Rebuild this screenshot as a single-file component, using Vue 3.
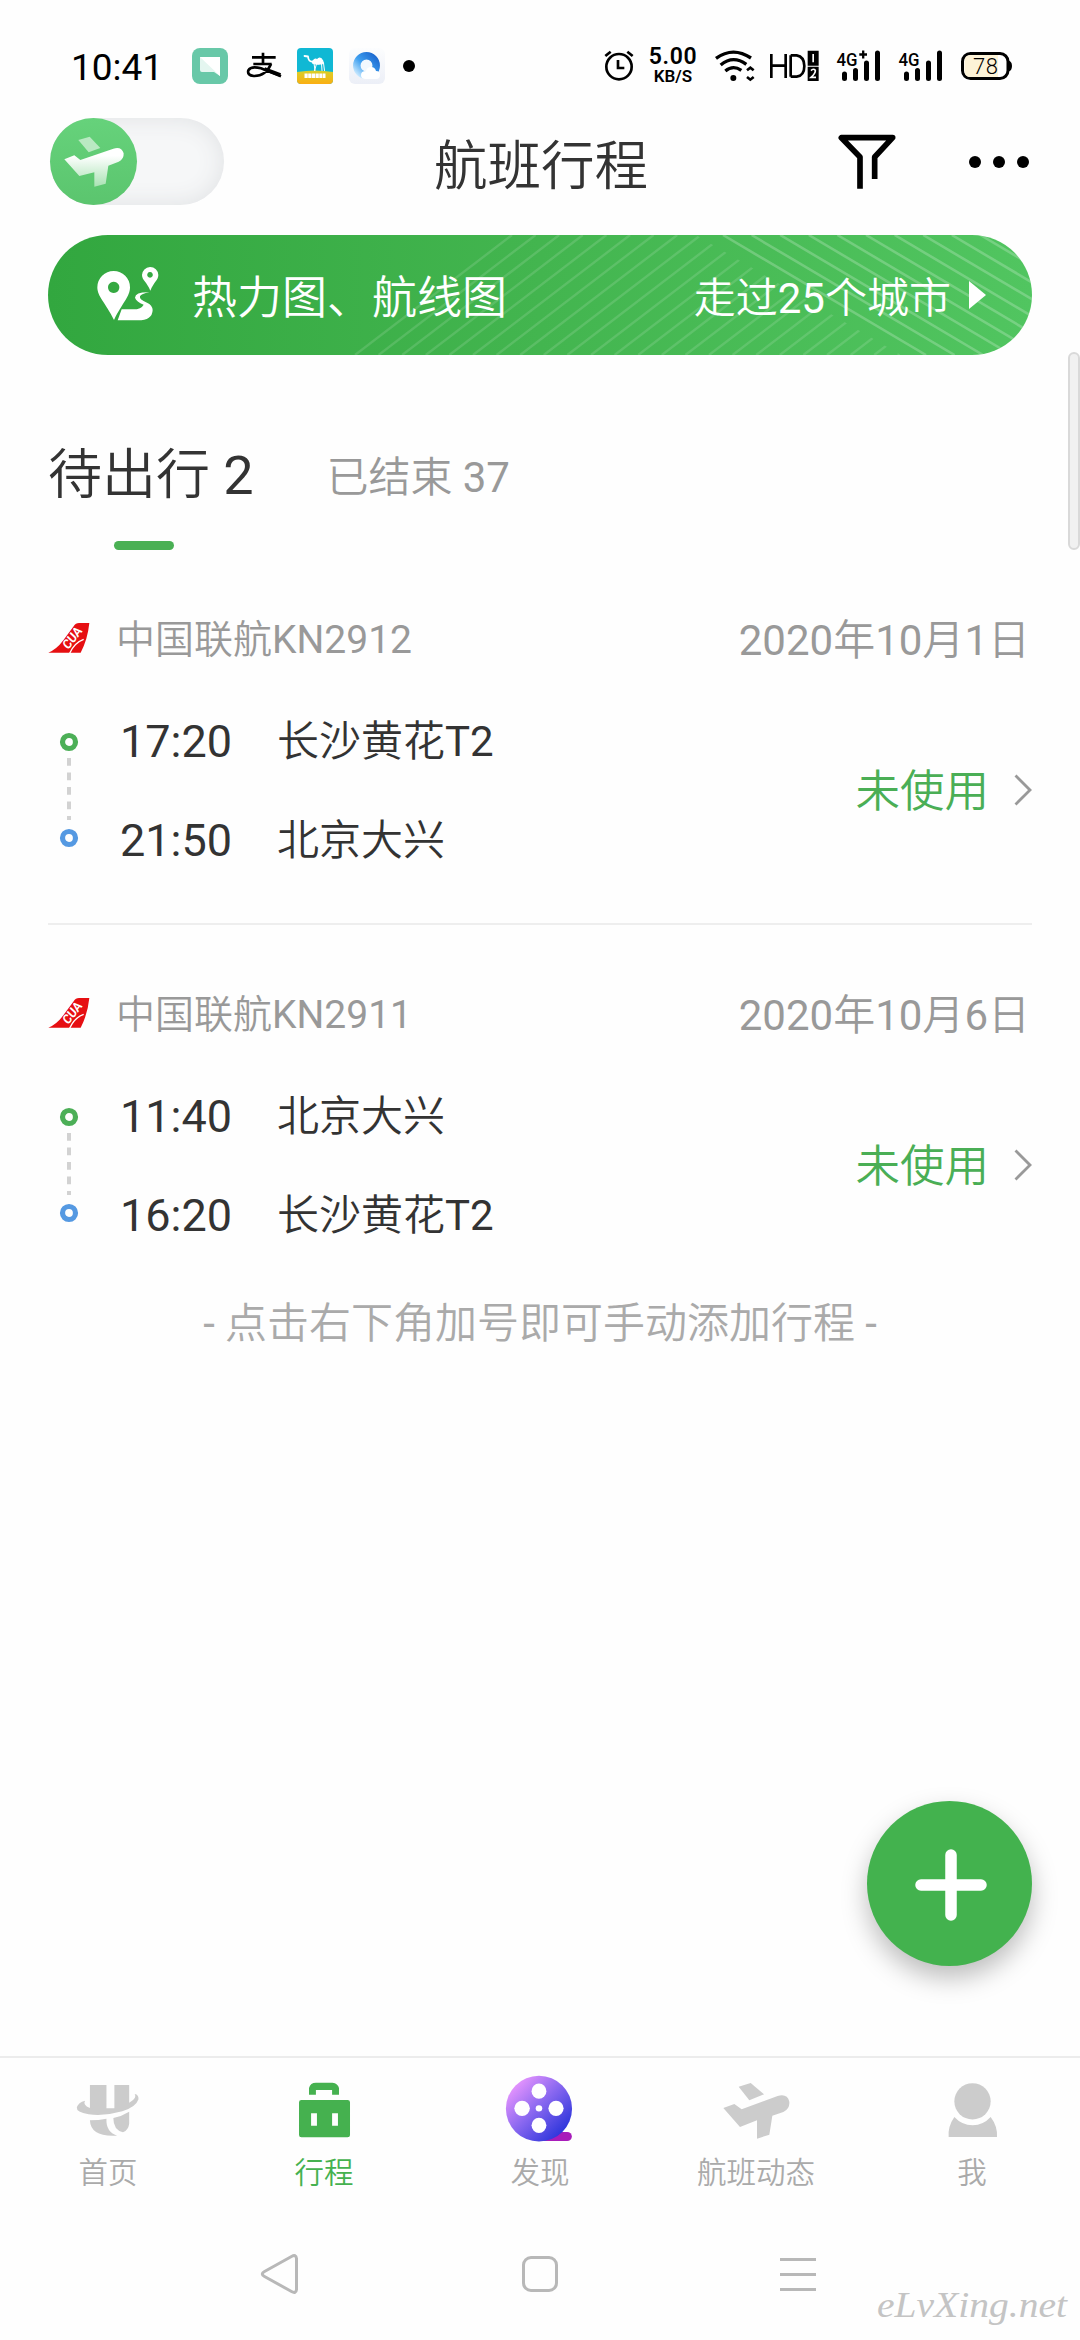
<script setup>
import { h } from 'vue'

const flights = [
  {
    no: '中国联航KN2912',
    date: '2020年10月1日',
    status: '未使用',
    stops: [
      { time: '17:20', place: '长沙黄花T2' },
      { time: '21:50', place: '北京大兴' }
    ]
  },
  {
    no: '中国联航KN2911',
    date: '2020年10月6日',
    status: '未使用',
    stops: [
      { time: '11:40', place: '北京大兴' },
      { time: '16:20', place: '长沙黄花T2' }
    ]
  }
]

const tabs = [
  { key: 'home', label: '首页' },
  { key: 'trip', label: '行程', active: true },
  { key: 'discover', label: '发现' },
  { key: 'status', label: '航班动态' },
  { key: 'me', label: '我' }
]

// Hanzi are set in a lighter weight than the Latin letters and digits beside them
const Mixed = ({ text }) =>
  h('span', text.split(/([\x21-\x7e]+)/).map(part =>
    /^[\x21-\x7e]/.test(part) ? h('span', { class: 'latin' }, part) : part
  ))
Mixed.props = ['text']

// Diagonal hatch of the banner, two directions
const risingLines = Array.from({ length: 24 }, (_, i) => 307 + i * 23.6)
const fallingLines = Array.from({ length: 12 }, (_, i) => 675 + i * 28.6)
</script>

<template>
  <div class="screen">
    <div class="status">
      <span class="clock">10:41</span>
      <svg class="s-chat" width="36" height="36" viewBox="0 0 36 36">
        <rect width="36" height="36" rx="8" fill="#68c8a8" />
        <path d="M8 9h20v19l-6-4H10q-2 0-2-2z" fill="#e4f6f0" />
        <path d="M8 9h20v19z" fill="#fff" />
      </svg>
      <svg class="s-pay" width="34" height="28" viewBox="620 68 102 84" fill="none" stroke="#000">
        <path d="M635 84H706M668 70V103M639 104H694" stroke-width="8" />
        <path d="M692 104Q676 141 640 140Q620 138 624 123Q632 109 662 117L722 141" stroke-width="8" />
        <path d="M672 119L720 137" stroke-width="12" />
      </svg>
      <svg class="s-camel" width="36" height="36" viewBox="0 0 36 36">
        <defs>
          <linearGradient id="sand" x1="0" y1="0" x2="0" y2="1">
            <stop offset="0" stop-color="#d8d12a" />
            <stop offset="1" stop-color="#fbae12" />
          </linearGradient>
          <clipPath id="camelClip"><rect width="36" height="36" rx="4" /></clipPath>
        </defs>
        <g clip-path="url(#camelClip)">
          <rect width="36" height="36" fill="#10b8d4" />
          <path d="M0 24Q18 21 36 24V36H0z" fill="url(#sand)" />
        </g>
        <g fill="none" stroke="#fff" stroke-linecap="round" stroke-linejoin="round">
          <path d="M7.500 8L11 8.500Q11.500 14 15.500 13.500" stroke-width="1.800" />
          <path d="M15.500 14Q18 9.500 20 12Q23 8 25.500 12.500L26.500 15.500Q21 17 16 15.500z" fill="#fff" stroke-width="1.200" />
          <path d="M17 15L18 22.500M19.500 16L17.500 22.500M24.500 15L25 22.500M26.500 15L27.500 22.500" stroke-width="1" />
        </g>
        <path d="M7.500 27.800H28.500" stroke="#fff" stroke-width="4.500" stroke-dasharray="3.200 .5" />
      </svg>
      <svg class="s-browser" width="36" height="36" viewBox="0 0 36 36">
        <defs>
          <linearGradient id="qb" x1="1" y1="0" x2="0" y2="1">
            <stop offset="0" stop-color="#1c68cf" />
            <stop offset=".55" stop-color="#3fa0f0" />
            <stop offset="1" stop-color="#cdebff" />
          </linearGradient>
          <linearGradient id="qbBg" x1="0" y1="0" x2="0" y2="1">
            <stop offset="0" stop-color="#fcfdfe" />
            <stop offset="1" stop-color="#eceff7" />
          </linearGradient>
        </defs>
        <rect width="36" height="36" rx="6" fill="url(#qbBg)" />
        <circle cx="17.500" cy="17.500" r="9.700" fill="#f2f8fe" stroke="url(#qb)" stroke-width="7.500" />
        <path d="M16 31q-4 0-4-4q0-4 5-4q1-4 5-4q4 0 5 4q4 0 4 4t-4 4z" fill="#fff" />
      </svg>
      <i class="s-dot"></i>

      <svg class="s-alarm" width="30" height="32" viewBox="42 62 90 96" fill="none" stroke="#000">
        <circle cx="87" cy="112" r="38" stroke-width="8" />
        <path d="M84 92V116H103" stroke-width="8" />
        <path d="M46 80L62 67M128 80L112 67" stroke-width="8" />
      </svg>
      <div class="s-speed">
        <span class="rate">5.00</span>
        <span class="unit">KB/S</span>
      </div>
      <svg class="s-wifi" width="40" height="32" viewBox="374 60 120 96" fill="none" stroke="#000" stroke-width="10">
        <path d="M377 85Q428 48 482 84M391 105Q428 74 468 103M405 123Q428 104 453 121" />
        <circle cx="429" cy="144" r="9" fill="#000" stroke="none" />
        <path d="M470 121L480 113L490 121M470 141L480 149L490 141" stroke-width="8" />
      </svg>
      <svg class="s-hd" width="49" height="32" viewBox="538 60 147 96">
        <path d="M542 72V144M585 72V144M542 107H585M600 76V140M600 76H618Q641 80 641 108Q641 137 618 140H600" fill="none" stroke="#000" stroke-width="8" />
        <path d="M651 62H684V107H651zM651 110H684V153H651z" />
        <path d="M667.500 72V97M661 122Q668 114 674 121Q675 129 661 142H676" fill="none" stroke="#fff" stroke-width="5" />
      </svg>
      <svg class="s-sig" width="45" height="40" viewBox="0 -4 45 40">
        <text x=".5" y="16" font-size="19" font-weight="500" textLength="21" lengthAdjust="spacingAndGlyphs">4G</text>
        <path d="M23.300 4.500H31M27.200 .5V8.500" stroke="#000" stroke-width="2.300" />
        <path d="M8.500 24V28.500M19.500 20.500V28.500M30.500 13V28.500M41.500 3V28.500" stroke="#000" stroke-width="5" stroke-linecap="round" />
      </svg>
      <svg class="s-sig" width="45" height="40" viewBox="0 -4 45 40">
        <text x=".5" y="16" font-size="19" font-weight="500" textLength="21" lengthAdjust="spacingAndGlyphs">4G</text>
        <path d="M8.500 24V28.500M19.500 20.500V28.500M30.500 13V28.500M41.500 3V28.500" stroke="#000" stroke-width="5" stroke-linecap="round" />
      </svg>
      <svg class="s-bat" width="51" height="28" viewBox="0 0 51 28">
        <rect x="1.500" y="1.500" width="45.500" height="25" rx="8" fill="#fff" stroke="#000" stroke-width="3" />
        <path d="M9.500 3H37V25H9.500Q3.500 25 3.500 19V9Q3.500 3 9.500 3z" fill="#fdf3d7" />
        <path d="M47 8.500Q51 9 51 14T47 19.500z" />
        <text x="12" y="21.500" font-size="22" font-weight="300" textLength="25">78</text>
      </svg>
    </div>

    <header class="header">
      <div class="toggle">
        <svg width="87" height="87" viewBox="30 264 261 261">
          <defs>
            <linearGradient id="knob" x1="0" y1="0" x2="0" y2="1">
              <stop offset="0" stop-color="#66d27b" />
              <stop offset="1" stop-color="#5bc56e" />
            </linearGradient>
            <linearGradient id="planeFill" x1="0" y1="0" x2="0" y2="1">
              <stop offset=".2" stop-color="#fff" />
              <stop offset="1" stop-color="#a9e2b3" />
            </linearGradient>
          </defs>
          <circle cx="160.500" cy="394.500" r="130.500" fill="url(#knob)" />
          <path d="M115 330L149 320L181 354L146 367z" fill="#b9e9c2" />
          <path d="M73 388L103 376L121 390L220 356Q244 348 251 370Q252 388 236 395L205 407L197 461L163 470V427L118 438z" fill="url(#planeFill)" />
        </svg>
      </div>
      <h1>航班行程</h1>
      <div class="actions">
        <svg width="58" height="55" viewBox="743 313 174 165" fill="none" stroke="#000" stroke-width="17" stroke-linejoin="round">
          <path d="M809 477V382L753 324H907L853 382V448" />
        </svg>
        <div class="dots"><i></i><i></i><i></i></div>
      </div>
    </header>

    <div class="banner">
      <svg class="hatch" width="984" height="120" viewBox="0 0 984 120">
        <defs>
          <clipPath id="risingClip"><path d="M0 0H648L853 120H0z" /></clipPath>
        </defs>
        <g clip-path="url(#risingClip)" stroke="#fff" stroke-opacity=".13" stroke-width="2.400">
          <line v-for="x in risingLines" :key="x" :x1="x" y1="120" :x2="x + 157" y2="0" />
        </g>
        <g stroke="#fff" stroke-opacity=".22" stroke-width="2.600">
          <line v-for="x in fallingLines" :key="x" :x1="x" y1="0" :x2="x + 203" y2="120" />
        </g>
      </svg>
      <svg class="route" width="62" height="56" viewBox="170 140 186 168" fill="#fff">
        <path fill-rule="evenodd" d="M220 155a49 49 0 0 1 49 49c0 28-22 45-48 98c-26-53-50-70-50-98a49 49 0 0 1 49-49zM220 187a17 17 0 1 0 .1 0z" />
        <path fill-rule="evenodd" d="M329 143a24.500 24.500 0 0 1 25 24c0 15-14 22-24 47c-10-25-25-32-25-47a24.500 24.500 0 0 1 24-24zM329 158a8.500 8.500 0 1 0 .1 0z" />
        <path d="M327 219Q285 218 284 235Q288 247 310 256Q303 270 278 270H244L232 303H290Q336 304 337 272Q336 257 320 250Q296 241 299 231Q303 223 327 219z" />
      </svg>
      <span class="banner-title">热力图、航线图</span>
      <Mixed class="banner-more" text="走过25个城市" />
      <i class="arrow"></i>
    </div>

    <nav class="segments">
      <div class="segment on"><Mixed text="待出行 2" /></div>
      <div class="segment"><Mixed text="已结束 37" /></div>
    </nav>

    <main class="list">
      <article v-for="f in flights" :key="f.no" class="flight">
        <div class="flight-head">
          <svg width="42" height="32" viewBox="57 603 126 96">
            <path d="M58 695Q82 686 103 658L134 616Q140 606 150 606H181Q176 655 155 695z" fill="#e60f12" />
            <path d="M122 697Q136 665 164 655" fill="none" stroke="#fff" stroke-width="4" />
            <text transform="translate(118 688) rotate(-53) skewX(-6)" font-size="38" font-weight="700" fill="#fff" textLength="72" lengthAdjust="spacingAndGlyphs">CUA</text>
          </svg>
          <Mixed class="no" :text="f.no" />
          <Mixed class="date" :text="f.date" />
        </div>
        <div class="flight-body">
          <svg class="track" width="18" height="114" viewBox="0 0 18 114" fill="none">
            <circle cx="9" cy="9" r="6.500" stroke="#4caf57" stroke-width="5.200" />
            <path d="M9 25V87" stroke="#d2d2d2" stroke-width="4" stroke-dasharray="7.800 6.700" />
            <circle cx="9" cy="105" r="6.500" stroke="#5599e2" stroke-width="5.200" />
          </svg>
          <div class="stops">
            <div v-for="s in f.stops" :key="s.time" class="stop">
              <span class="time">{{ s.time }}</span>
              <Mixed class="place" :text="s.place" />
            </div>
          </div>
          <span class="state">{{ f.status }}</span>
          <svg class="chev" width="18" height="32" viewBox="0 0 18 32" fill="none" stroke="#999" stroke-width="2.800">
            <path d="M1.500 1.500L16 16L1.500 30.500" />
          </svg>
        </div>
      </article>
      <p class="hint"><Mixed text="- 点击右下角加号即可手动添加行程 -" /></p>
    </main>

    <footer class="tabbar">
      <div v-for="t in tabs" :key="t.key" class="tab" :class="{ active: t.active }">
        <svg v-if="t.key === 'home'" width="72" height="68" viewBox="64 72 209 204" preserveAspectRatio="none" fill="#ccc">
          <path d="M116 105H164V175H187V105H230V158Q254 145 246 132Q258 134 257 148Q250 171 210 184Q160 199 112 193Q76 187 78 172Q82 157 102 152Q94 164 116 174z" />
          <path d="M116 211Q142 211 164 206Q162 245 195 257Q118 262 116 211z" />
          <path d="M184 204Q210 198 230 185V221Q228 239 212 247Q184 240 184 204z" />
        </svg>
        <svg v-else-if="t.key === 'trip'" width="72" height="68" viewBox="691 72 209 204" preserveAspectRatio="none" fill="#45b14f">
          <path d="M752 134V114Q756 98 772 98H820Q836 100 839 114V134H819V120H772V134z" />
          <path fill-rule="evenodd" d="M730 150H864Q871 150 871 157V255Q871 262 864 262H730Q723 262 723 255V157Q723 150 730 150zM758 190V227H775V190zM819 190V227H836V190z" />
        </svg>
        <svg v-else-if="t.key === 'discover'" width="72" height="68" viewBox="1318.500 72 209 204" preserveAspectRatio="none">
          <defs>
            <linearGradient id="film" x1=".1" y1=".1" x2=".85" y2=".85">
              <stop offset="0" stop-color="#ee98ff" />
              <stop offset=".5" stop-color="#8a68f0" />
              <stop offset="1" stop-color="#3037dc" />
            </linearGradient>
          </defs>
          <path d="M1420 246H1502a13.500 13.500 0 0 1 0 27H1420z" fill="#a81cba" />
          <ellipse cx="1420" cy="176" rx="96" ry="98.500" fill="url(#film)" />
          <g fill="#fff">
            <ellipse cx="1420" cy="123.500" rx="21.500" ry="23" />
            <ellipse cx="1371" cy="175" rx="22.500" ry="23" />
            <ellipse cx="1469.500" cy="175" rx="22" ry="23" />
            <ellipse cx="1420" cy="226" rx="21.500" ry="23" />
            <circle cx="1420" cy="175" r="9.500" />
          </g>
        </svg>
        <svg v-else-if="t.key === 'status'" width="72" height="68" viewBox="390 72 216 204" fill="#ccc">
          <path d="M446 110L482 99L522 133L478 151z" />
          <path d="M400 174L433 162L455 178L563 138Q592 130 598 155Q600 176 580 186L547 197L538 254L501 266V211L450 231z" />
        </svg>
        <svg v-else width="72" height="68" viewBox="1038 72 216 204" fill="#ccc">
          <circle cx="1147.500" cy="154" r="54.500" />
          <path d="M1093 201Q1115 225 1148 226Q1180 225 1202 201Q1223 229 1221 261H1076Q1073 230 1093 201z" />
        </svg>
        <span>{{ t.label }}</span>
      </div>
    </footer>

    <div class="sysnav">
      <svg width="40" height="44" viewBox="2 0 40 44">
        <path d="M31.500 4.500Q36 2 36.500 6.500V37.500Q36 42 31.500 39.500L4.500 24.500Q0 22 4.500 19.500z" />
      </svg>
      <svg width="40" height="44" viewBox="0 0 40 44">
        <rect x="3.500" y="5.500" width="33" height="33" rx="7.500" />
      </svg>
      <svg width="40" height="44" viewBox="0 0 40 44">
        <path d="M2 7.500H38M2 22.500H38M2 37.500H38" />
      </svg>
    </div>

    <button class="fab" aria-label="add">
      <svg width="72" height="72" viewBox="0 0 72 72" stroke="#fff" stroke-width="11.500" stroke-linecap="round">
        <path d="M36 6V66M6 36H66" />
      </svg>
    </button>
    <i class="scrollbar"></i>
    <svg class="watermark" width="200" height="52" viewBox="0 0 200 52">
      <text x="3" y="33" textLength="190" lengthAdjust="spacingAndGlyphs">eLvXing.net</text>
    </svg>
  </div>
</template>

<style>
body {
  background: #fefefe;
}
.latin {
  font-weight: 400;
}
</style>

<style scoped>
.screen {
  position: relative;
  display: flex;
  flex-direction: column;
  width: 1080px;
  height: 2340px;
  overflow: hidden;
  background: #fefefe;
  color: #333;
  font-family: Roboto, "Noto Sans CJK SC", sans-serif;
}

svg {
  display: block;
  flex: none;
  overflow: visible;
}

.status {
  display: flex;
  align-items: center;
  height: 68px;
  padding: 32px 68px 0 71px;
  color: #000;
}
.clock {
  width: 121px;
  padding-top: 3px;
  font-size: 37px;
  line-height: 40px;
}
.s-pay { margin-left: 19px; }
.s-camel { margin-left: 16px; }
.s-browser { margin-left: 16px; }
.s-dot {
  width: 12px;
  height: 12px;
  margin-left: 18px;
  border-radius: 50%;
  background: #000;
}
.s-alarm { margin-left: auto; }
.s-speed {
  display: flex;
  flex-direction: column;
  align-items: center;
  width: 50px;
  margin-left: 14px;
  font-weight: 600;
}
.rate {
  font-size: 23px;
  line-height: 20px;
  letter-spacing: 0.6px;
}
.unit {
  font-size: 17px;
  line-height: 18px;
}
.s-wifi { margin-left: 17px; }
.s-hd { margin-left: 15px; }
.s-sig { margin-left: 17px; }
.s-bat { margin-left: 18px; }

.header {
  display: grid;
  grid-template-columns: 1fr auto 1fr;
  align-items: center;
  height: 123px;
  padding: 0 48px 0 50px;
}
.toggle {
  width: 174px;
  height: 87px;
  border-radius: 44px;
  background: #f6f7f8;
  box-shadow: inset 0 0 24px #dfe1e3;
}
h1 {
  margin: 0;
  padding-top: 11px;
  font-size: 53.5px;
  font-weight: 350;
  line-height: 64px;
}
.actions {
  display: flex;
  justify-content: flex-end;
  align-items: center;
}
.dots {
  display: flex;
  gap: 12px;
  margin: 0 3px 0 73px;
}
.dots i {
  width: 12px;
  height: 12px;
  border-radius: 50%;
  background: #000;
}

.banner {
  position: relative;
  display: flex;
  align-items: center;
  height: 120px;
  margin: 12px 48px 0;
  border-radius: 60px;
  overflow: hidden;
  background: linear-gradient(90deg, #32a73f, #43b54f 50%, #51c560);
  color: #fff;
  font-weight: 350;
}
.hatch {
  position: absolute;
  inset: 0;
}
/* keeps the content above the hatch layer */
.route,
.banner-title,
.banner-more,
.arrow {
  position: relative;
}
.route {
  margin: -2px 0 0 49px;
}
.banner-title {
  margin: 8px 0 0 33px;
  font-size: 45px;
  line-height: 60px;
}
.banner-more {
  margin: 7px 0 0 auto;
  font-size: 42px;
  line-height: 60px;
}
.arrow {
  margin: 0 46px 0 18px;
  border: solid transparent;
  border-width: 14.5px 0 14.5px 17px;
  border-left-color: #fff;
}

.segments {
  display: flex;
  align-items: center;
  height: 120px;
  margin: 60px 48px 0;
  font-weight: 350;
}
.segment {
  padding-top: 5px;
  color: #999;
  font-size: 42px;
  line-height: 64px;
}
.segment.on {
  position: relative;
  padding-top: 2px;
  margin-right: 73px;
  color: #333;
  font-size: 54px;
}
.segment.on::after {
  content: "";
  position: absolute;
  left: 66px;
  top: 99px;
  width: 60px;
  height: 9px;
  border-radius: 5px;
  background: #4ab054;
}

.list {
  padding: 0 48px;
  margin-top: 15px;
}
.flight {
  height: 373px;
  border-bottom: 2px solid #eee;
}
.flight:last-of-type {
  border-color: transparent;
}
.flight-head {
  display: flex;
  align-items: center;
  height: 60px;
  padding-top: 58px;
  color: #999;
  font-weight: 350;
}
.no {
  margin: 3px 0 0 26px;
  font-size: 39px;
  line-height: 60px;
}
.date {
  margin: 6px 2px 0 auto;
  font-size: 42px;
  line-height: 60px;
}
.flight-body {
  display: flex;
  align-items: center;
  height: 200px;
  padding: 22px 0 0 12px;
}
.track {
  margin-right: 42px;
}
.stop {
  display: flex;
  align-items: center;
  height: 99px;
}
.time {
  width: 157px;
  padding-top: 1px;
  font-size: 45px;
}
.place {
  font-size: 42px;
  line-height: 60px;
  margin-top: 2px;
  font-weight: 350;
}
.state {
  margin: 4px 0 0 auto;
  color: #4aae55;
  font-size: 44.5px;
  font-weight: 350;
  line-height: 60px;
}
.chev {
  margin-left: 25px;
}
.hint {
  margin: -6px 0 0;
  text-align: center;
  color: #aaa;
  font-size: 42px;
  font-weight: 350;
  line-height: 60px;
}

.tabbar {
  display: flex;
  height: 150px;
  margin-top: auto;
  border-top: 2px solid #ececec;
}
.tab {
  display: flex;
  flex: 1;
  flex-direction: column;
  align-items: center;
  padding-top: 16px;
  color: #aaa;
  font-size: 29.5px;
  font-weight: 350;
  line-height: 40px;
}
.tab span {
  margin-top: 11px;
}
.tab.active {
  color: #45b14f;
}

.sysnav {
  display: flex;
  justify-content: center;
  gap: 218px;
  height: 88px;
  padding-top: 44px;
}
.sysnav svg {
  fill: none;
  stroke: #b8b8b8;
  stroke-width: 3;
}

.fab {
  position: absolute;
  left: 867px;
  top: 1801px;
  display: grid;
  place-items: center;
  width: 165px;
  height: 165px;
  padding: 3px 0 0 3px;
  border: 0;
  border-radius: 50%;
  background: #43b24e;
  box-shadow: 0 12px 26px rgba(0, 0, 0, 0.26);
}
.scrollbar {
  position: absolute;
  right: 0;
  top: 352px;
  box-sizing: border-box;
  width: 12px;
  height: 198px;
  border: 2px solid #d9d9d9;
  border-radius: 6px;
  background: #f1f1f1;
}
.watermark {
  position: absolute;
  right: 6px;
  bottom: 4px;
  fill: #c4c4c4;
  font: italic 35px "Liberation Serif", serif;
}
</style>
